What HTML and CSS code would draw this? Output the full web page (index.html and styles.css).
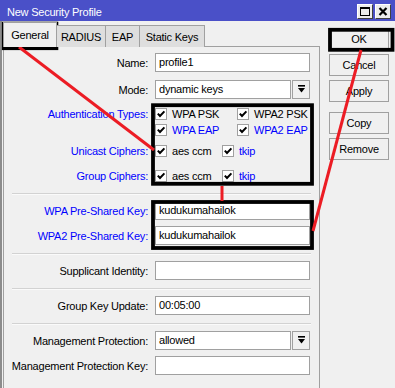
FILE: index.html
```html
<!DOCTYPE html>
<html>
<head>
<meta charset="utf-8">
<title>New Security Profile</title>
<link rel="stylesheet" href="styles.css">
</head>
<body>
<div class="window">
  <div class="titlebar">
    <span class="title">New Security Profile</span>
    <div class="tb-buttons">
      <span class="tb-btn"><svg width="12" height="11" viewBox="0 0 12 11"><rect x="1.5" y="1.5" width="9" height="8" fill="none" stroke="#000" stroke-width="1"/><rect x="1" y="1" width="10" height="2" fill="#000"/></svg></span>
      <span class="tb-btn"><svg width="12" height="11" viewBox="0 0 12 11"><path d="M2.5 2 L9.5 9 M9.5 2 L2.5 9" stroke="#000" stroke-width="2.2"/></svg></span>
    </div>
  </div>
  <div class="main">
    <div class="left">
      <div class="tabs">
        <div class="tab tab-general active">General</div>
        <div class="tab tab-radius">RADIUS</div>
        <div class="tab tab-eap">EAP</div>
        <div class="tab tab-static">Static Keys</div>
      </div>
      <div class="panel">
        <div class="row first">
          <div class="label">Name:</div>
          <div class="field">profile1</div>
        </div>
        <div class="row gap8">
          <div class="label">Mode:</div>
          <div class="select">
            <div class="field short">dynamic keys</div>
            <div class="drop"><svg width="9" height="9" viewBox="0 0 9 9"><rect x="1" y="0" width="7" height="1.6" fill="#000"/><path d="M1 3 H8 L4.5 7.5 Z" fill="#000"/></svg></div>
          </div>
        </div>

        <div class="crow cr1">
          <div class="label blue">Authentication Types:</div>
          <div class="ck w82"><span class="box"><svg width="10" height="10" viewBox="0 0 10 10"><path d="M1.8 4.6 L4 7 L8.4 2.4" fill="none" stroke="#000" stroke-width="2"/></svg></span><span>WPA PSK</span></div>
          <div class="ck"><span class="box"><svg width="10" height="10" viewBox="0 0 10 10"><path d="M1.8 4.6 L4 7 L8.4 2.4" fill="none" stroke="#000" stroke-width="2"/></svg></span><span>WPA2 PSK</span></div>
        </div>
        <div class="crow cr2">
          <div class="label"></div>
          <div class="ck w82"><span class="box"><svg width="10" height="10" viewBox="0 0 10 10"><path d="M1.8 4.6 L4 7 L8.4 2.4" fill="none" stroke="#000" stroke-width="2"/></svg></span><span class="blue">WPA EAP</span></div>
          <div class="ck"><span class="box"><svg width="10" height="10" viewBox="0 0 10 10"><path d="M1.8 4.6 L4 7 L8.4 2.4" fill="none" stroke="#000" stroke-width="2"/></svg></span><span class="blue">WPA2 EAP</span></div>
        </div>
        <div class="crow cr3">
          <div class="label blue">Unicast Ciphers:</div>
          <div class="ck w67"><span class="box"><svg width="10" height="10" viewBox="0 0 10 10"><path d="M1.8 4.6 L4 7 L8.4 2.4" fill="none" stroke="#000" stroke-width="2"/></svg></span><span>aes ccm</span></div>
          <div class="ck"><span class="box"><svg width="10" height="10" viewBox="0 0 10 10"><path d="M1.8 4.6 L4 7 L8.4 2.4" fill="none" stroke="#000" stroke-width="2"/></svg></span><span class="blue">tkip</span></div>
        </div>
        <div class="crow cr4">
          <div class="label blue">Group Ciphers:</div>
          <div class="ck w67"><span class="box"><svg width="10" height="10" viewBox="0 0 10 10"><path d="M1.8 4.6 L4 7 L8.4 2.4" fill="none" stroke="#000" stroke-width="2"/></svg></span><span>aes ccm</span></div>
          <div class="ck"><span class="box"><svg width="10" height="10" viewBox="0 0 10 10"><path d="M1.8 4.6 L4 7 L8.4 2.4" fill="none" stroke="#000" stroke-width="2"/></svg></span><span class="blue">tkip</span></div>
        </div>

        <div class="sep sep9"></div>

        <div class="row">
          <div class="label blue">WPA Pre-Shared Key:</div>
          <div class="field">kudukumahailok</div>
        </div>
        <div class="row">
          <div class="label blue">WPA2 Pre-Shared Key:</div>
          <div class="field">kudukumahailok</div>
        </div>

        <div class="sep"></div>

        <div class="row">
          <div class="label">Supplicant Identity:</div>
          <div class="field"></div>
        </div>

        <div class="sep"></div>

        <div class="row">
          <div class="label">Group Key Update:</div>
          <div class="field">00:05:00</div>
        </div>

        <div class="sep"></div>

        <div class="row">
          <div class="label">Management Protection:</div>
          <div class="select">
            <div class="field short">allowed</div>
            <div class="drop"><svg width="9" height="9" viewBox="0 0 9 9"><rect x="1" y="0" width="7" height="1.6" fill="#000"/><path d="M1 3 H8 L4.5 7.5 Z" fill="#000"/></svg></div>
          </div>
        </div>
        <div class="row">
          <div class="label">Management Protection Key:</div>
          <div class="field"></div>
        </div>
      </div>
    </div>
    <div class="right">
      <div class="btn">OK</div>
      <div class="btn">Cancel</div>
      <div class="btn">Apply</div>
      <div class="btn spaced">Copy</div>
      <div class="btn">Remove</div>
    </div>
  </div>
  <svg class="annot" width="395" height="388" viewBox="0 0 395 388">
    <g fill="none" stroke="#000" stroke-width="3.8">
      <rect x="3.8" y="23.6" width="52.6" height="24.6"/>
      <rect x="330" y="29.8" width="62.5" height="20"/>
      <rect x="153" y="105.2" width="159" height="78.6"/>
      <rect x="153" y="202" width="159" height="46"/>
    </g>
    <g stroke="#ec1c24" stroke-width="3" fill="none">
      <line x1="19" y1="47" x2="154" y2="150"/>
      <line x1="222" y1="186" x2="222" y2="201"/>
      <line x1="361" y1="50" x2="313" y2="231"/>
    </g>
  </svg>
</div>
</body>
</html>
```

FILE: styles.css
```css
html, body {
  margin: 0;
  padding: 0;
}

body {
  width: 395px;
  height: 388px;
  overflow: hidden;
  background: #f0f0f0;
  font-family: "Liberation Sans", Arial, sans-serif;
  font-size: 11px;
  letter-spacing: -0.22px;
  color: #000;
}

.window {
  position: relative;
  width: 395px;
  height: 388px;
  display: flex;
  flex-direction: column;
}

.titlebar {
  height: 21px;
  flex: none;
  background: #4a50c8;
  color: #fff;
  display: flex;
  align-items: center;
  justify-content: space-between;
  padding-left: 7px;
  padding-right: 4px;
  box-sizing: border-box;
}

.title {
  padding-top: 2px;
  font-size: 11px;
}

.tb-buttons {
  display: flex;
  gap: 2px;
  padding-top: 2px;
}

.tb-btn {
  width: 16px;
  height: 15px;
  box-sizing: border-box;
  background: #ececec;
  border: 1px solid #404040;
  border-top-color: #fff;
  border-left-color: #fff;
  display: flex;
  align-items: center;
  justify-content: center;
}

.main {
  flex: 1;
  display: flex;
  border-left: 2px solid #8c8c8c;
}

.left {
  margin-left: 1px;
  width: 317px;
  display: flex;
  flex-direction: column;
}

.tabs {
  height: 26px;
  display: flex;
  align-items: flex-end;
  margin-bottom: -1px;
  position: relative;
  z-index: 1;
}

.tab {
  height: 22px;
  box-sizing: border-box;
  border: 1px solid #a0a0a0;
  border-bottom: none;
  background: #dedede;
  display: flex;
  align-items: center;
  justify-content: center;
  margin-left: -1px;
}

.tab.active {
  height: 25px;
  background: #f0f0f0;
  margin-left: 0;
}

.tab-general { width: 54px; }
.tab-radius { width: 50px; }
.tab-eap { width: 35px; }
.tab-static { width: 66px; }

.panel {
  flex: 1;
  border: 1px solid #a0a0a0;
  border-bottom: none;
  background: #f0f0f0;
  display: flex;
  flex-direction: column;
}

.row {
  display: flex;
  align-items: center;
  height: 19px;
  margin-top: 6px;
  gap: 7px;
}

.row.first { margin-top: 6px; }
.row.gap8 { margin-top: 8px; }

.label {
  width: 144px;
  flex: none;
  text-align: right;
  white-space: nowrap;
}

.blue { color: #0000ff; }

.field {
  width: 155px;
  height: 19px;
  box-sizing: border-box;
  border: 1px solid #a0a0a0;
  background: #fff;
  padding-left: 3px;
  line-height: 17px;
  white-space: nowrap;
}

.field.short { width: 136px; }

.select {
  display: flex;
  gap: 1px;
}

.drop {
  width: 18px;
  height: 19px;
  box-sizing: border-box;
  border: 1px solid #a0a0a0;
  background: #f0f0f0;
  display: flex;
  align-items: center;
  justify-content: center;
}

.crow {
  display: flex;
  align-items: center;
  height: 16px;
  gap: 7px;
}

.cr1 { margin-top: 7px; }
.cr2 { margin-top: 0; }
.cr3 { margin-top: 5px; }
.cr4 { margin-top: 9px; }

.ck {
  display: flex;
  align-items: center;
  gap: 5px;
  white-space: nowrap;
}

.crow .ck + .ck { margin-left: -7px; }

.w82 { width: 82px; }
.w67 { width: 67px; }

.box {
  width: 12px;
  height: 12px;
  box-sizing: border-box;
  border: 1px solid #a0a0a0;
  background: #fff;
  display: flex;
  align-items: center;
  justify-content: center;
  flex: none;
}

.sep {
  margin: 8px 8px 0 8px;
  height: 0;
  border-top: 1px solid #d2d2d2;
  border-bottom: 1px solid #fafafa;
}

.sep.sep9 { margin-top: 9px; }

.right {
  margin-left: 9px;
  padding-top: 7px;
  display: flex;
  flex-direction: column;
  gap: 4px;
}

.btn {
  width: 60px;
  height: 22px;
  box-sizing: border-box;
  border: 1px solid #a0a0a0;
  background: #f0f0f0;
  display: flex;
  align-items: center;
  justify-content: center;
}

.btn.spaced { margin-top: 6px; }

.annot {
  position: absolute;
  left: 0;
  top: 0;
  pointer-events: none;
}
```
